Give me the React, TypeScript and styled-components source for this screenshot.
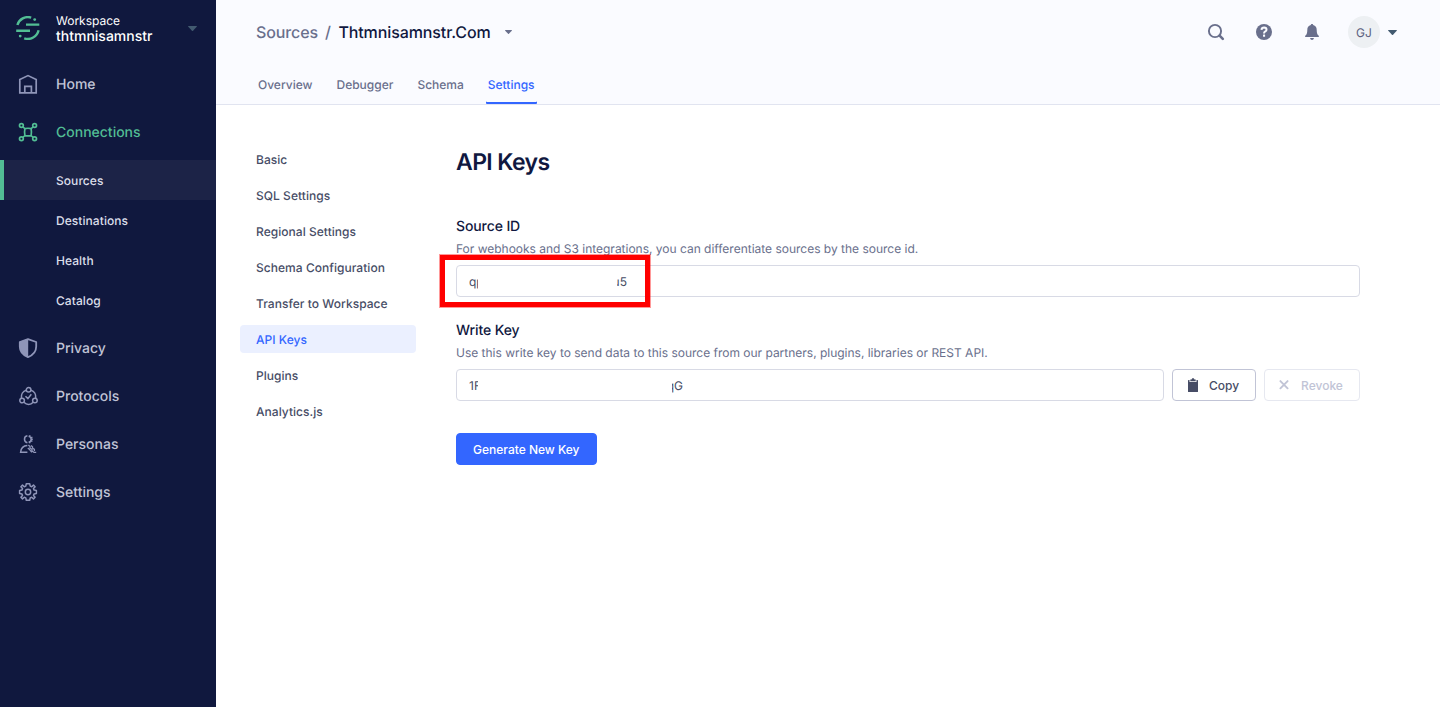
import React from 'react';
import styled, { createGlobalStyle } from 'styled-components';

const GlobalStyle = createGlobalStyle`
  *, *::before, *::after { box-sizing: border-box; }
  body {
    margin: 0;
    background: #fff;
    color: #474d66;
    font-family: Inter, "Liberation Sans", sans-serif;
    font-size: 12px;
    -webkit-font-smoothing: antialiased;
    text-rendering: geometricPrecision;
  }
  button, input { font: inherit; }
`;

const Page = styled.div`
  display: flex;
  height: 707px;
  overflow: hidden;
`;

const Sidebar = styled.aside`
  flex: none;
  width: 216px;
  background: #10183e;
`;

const Workspace = styled.div`
  display: flex;
  align-items: center;
  height: 60px;
  padding: 0 19px 4px 16px;
`;

const WorkspaceText = styled.div`
  flex: 1;
  margin-left: 16px;
  color: #fff;
`;

const WorkspaceLabel = styled.div`
  font-size: 12px;
  line-height: 17px;
`;

const WorkspaceName = styled.div`
  font-size: 14px;
  font-weight: 500;
  line-height: 16px;
`;

const NavItem = styled.div<{ $active?: boolean }>`
  display: flex;
  align-items: center;
  gap: 16px;
  height: 48px;
  padding-left: 16px;
  color: ${(p) => (p.$active ? '#52bd94' : '#c0c4d6')};
  font-size: 14px;
  font-weight: 500;
  svg { color: ${(p) => (p.$active ? '#52bd94' : '#8f95b8')}; }
`;

const NavLabel = styled.span`
  padding-top: 2px;
  line-height: 18px;
`;

const SubNav = styled.div`
  padding: 4px 0;
`;

const SubItem = styled.div<{ $active?: boolean }>`
  height: 40px;
  padding-left: 52px;
  border-left: 4px solid ${(p) => (p.$active ? '#52bd94' : 'transparent')};
  background: ${(p) => (p.$active ? '#1c2347' : 'transparent')};
  color: #dcdfea;
  font-size: 12px;
  font-weight: 500;
  line-height: 41px;
  letter-spacing: 0.06px;
`;

const Main = styled.main`
  flex: 1;
  min-width: 0;
`;

const Header = styled.header`
  height: 105px;
  background: #fafbff;
  border-bottom: 1px solid #e1e4f0;
`;

const TopBar = styled.div`
  display: flex;
  align-items: center;
  justify-content: space-between;
  height: 64px;
  padding: 0 43.5px 0 40px;
`;

const Breadcrumb = styled.div`
  display: flex;
  align-items: center;
  font-size: 16px;
  font-weight: 500;
  letter-spacing: -0.1px;
  color: #696f8c;
`;

const Slash = styled.span`
  margin: 0 7.5px 0 7px;
`;

const Current = styled.span`
  margin-right: 14.5px;
  color: #101840;
`;

const Tools = styled.div`
  display: flex;
  align-items: center;
  gap: 24px;
  color: #696f8c;
`;

const Account = styled.div`
  display: flex;
  align-items: center;
  gap: 7.5px;
`;

const Avatar = styled.div`
  display: grid;
  place-items: center;
  width: 32px;
  height: 32px;
  border-radius: 50%;
  background: #edf0f3;
  color: #5c6280;
  font-size: 12px;
`;

const Tabs = styled.nav`
  display: flex;
  gap: 20px;
  height: 40px;
  padding-left: 40px;
`;

const Tab = styled.div<{ $active?: boolean }>`
  height: 40px;
  padding: 0 2px;
  line-height: 41px;
  font-weight: 500;
  color: ${(p) => (p.$active ? '#3366ff' : '#696f8c')};
  box-shadow: ${(p) => (p.$active ? 'inset 0 -2px #3366ff' : 'none')};
  border-radius: 1px;
`;

const Body = styled.div`
  display: flex;
  gap: 40px;
  padding: 40px 80px 0 24px;
`;

const SettingsNav = styled.nav`
  display: flex;
  flex: none;
  flex-direction: column;
  gap: 8px;
  width: 176px;
`;

const SettingsItem = styled.div<{ $active?: boolean }>`
  height: 28px;
  padding-left: 16px;
  border-radius: 4px;
  line-height: 29px;
  font-weight: 500;
  letter-spacing: 0.04px;
  background: ${(p) => (p.$active ? '#ebf0ff' : 'transparent')};
  color: ${(p) => (p.$active ? '#3366ff' : '#474d66')};
`;

const Content = styled.section`
  flex: 1;
  min-width: 0;
`;

const Title = styled.h1`
  margin: 0 0 38px;
  color: #101840;
  font-size: 23px;
  font-weight: 600;
  line-height: 34px;
  letter-spacing: -0.6px;
`;

const Field = styled.div`
  position: relative;
  margin-bottom: 24px;
`;

const Label = styled.div`
  color: #101840;
  font-size: 14px;
  font-weight: 500;
  line-height: 20px;
  letter-spacing: -0.1px;
`;

const Hint = styled.div`
  margin: 3px 0 7px;
  color: #696f8c;
  font-size: 12px;
  line-height: 18px;
  letter-spacing: -0.01px;
`;

const FieldRow = styled.div`
  display: flex;
  gap: 8px;
`;

const KeyBox = styled.div`
  display: flex;
  flex: 1;
  align-items: center;
  height: 32px;
  padding-left: 12px;
  border: 1px solid #d8dae5;
  border-radius: 4px;
  font-size: 12px;
`;

const Fragment = styled.span<{ $width: number; $gap?: number; $tail?: boolean }>`
  display: flex;
  justify-content: ${(p) => (p.$tail ? 'flex-end' : 'flex-start')};
  width: ${(p) => p.$width}px;
  margin-left: ${(p) => p.$gap ?? 0}px;
  overflow: hidden;
  white-space: nowrap;
`;

const Highlight = styled.div`
  position: absolute;
  top: 38px;
  left: -16px;
  width: 210px;
  height: 52px;
  border: 5px solid #ff0000;
  box-shadow: 0 0 0 1px rgba(255, 0, 0, 0.4);
`;

const Button = styled.button<{ $kind: 'default' | 'disabled' | 'primary' }>`
  display: flex;
  align-items: center;
  justify-content: center;
  height: 32px;
  padding: 0;
  border: 1px solid ${(p) => ({ default: '#c1c4d6', disabled: '#e6e8f0', primary: '#3366ff' })[p.$kind]};
  border-radius: 4px;
  background: ${(p) => (p.$kind === 'primary' ? '#3366ff' : '#fff')};
  color: ${(p) => ({ default: '#474d66', disabled: '#c1c4d6', primary: '#fff' })[p.$kind]};
  font-weight: 500;
`;

const CopyButton = styled(Button)`
  width: 84px;
  padding-right: 2px;
  gap: 10px;
`;

const RevokeButton = styled(Button)`
  width: 96px;
  padding-right: 3px;
  gap: 11px;
`;

const GenerateButton = styled(Button)`
  width: 140.5px;
  margin-top: 32px;
`;

const Caret = ({ w, h, color }: { w: number; h: number; color: string }) => (
  <svg width={w} height={h} viewBox="0 0 10 5" preserveAspectRatio="none">
    <path d="M0.6 0H9.4Q10.2 0.1 9.7 0.8L5.6 4.7Q5 5.2 4.4 4.7L0.3 0.8Q-0.2 0.1 0.6 0Z" fill={color} />
  </svg>
);

const Logo = () => (
  <svg width="24" height="24" viewBox="0 0 24 24" fill="none" stroke="#52bd94" strokeWidth="2.4">
    <path d="M1.4 9A11 11 0 0 1 15.2 1.6M22.6 14.3A11 11 0 0 1 8.2 22.3M10 8.6H23.3M0.2 14.7H14" />
    <circle cx="18.7" cy="3.6" r="1.4" fill="#52bd94" stroke="none" />
    <circle cx="4.2" cy="20.1" r="1.4" fill="#52bd94" stroke="none" />
  </svg>
);

const NavIcon = ({ children }: { children: React.ReactNode }) => (
  <svg width="24" height="24" viewBox="0 0 24 24" fill="none" stroke="currentColor" strokeWidth="1.5">
    {children}
  </svg>
);

const HomeIcon = () => (
  <NavIcon>
    <path strokeWidth="1.7" d="M3.8 20.9V7.6L12 3.6L20.2 7.6V20.9ZM8.8 20.9V14.3H15.4V20.9" />
  </NavIcon>
);

const ConnectionsIcon = () => (
  <NavIcon>
    <g strokeWidth="1.7">
      <circle cx="5.4" cy="5.5" r="1.9" />
      <circle cx="18.6" cy="5.5" r="1.9" />
      <circle cx="5.4" cy="18.7" r="1.9" />
      <circle cx="18.6" cy="18.7" r="1.9" />
      <path d="M6.8 6.9L8.9 8.6Q12 7.9 15.1 8.6L17.2 6.9M6.8 17.3L8.9 15.6Q12 16.3 15.1 15.6L17.2 17.3M8.9 8.6Q8.2 12.1 8.9 15.6M15.1 8.6Q15.8 12.1 15.1 15.6" />
    </g>
  </NavIcon>
);

const PrivacyIcon = () => (
  <NavIcon>
    <path strokeWidth="1.8" strokeLinejoin="round" d="M12 3.2L20.2 6V10.5C20.2 15.3 16.8 19.2 12 21.1C7.2 19.2 3.8 15.3 3.8 10.5V6Z" />
    <path fill="currentColor" stroke="none" d="M12.2 2.8V21.4C7 19.4 3.5 15.3 3.5 10.5V6Z" />
  </NavIcon>
);

const ProtocolsIcon = () => (
  <NavIcon>
    <circle cx="12.6" cy="5.8" r="2.3" />
    <circle cx="6.1" cy="16.5" r="2.3" />
    <circle cx="18.9" cy="16.5" r="2.3" />
    <path d="M10.2 6.2C6.8 7.1 5 10.5 5.4 14M15 6.2C18.4 7.1 20.1 10.5 19.7 14M7.9 18.2C10.8 21.1 14.6 21.1 17.2 18.2M9.5 12.3L11.9 14.6L15.3 10.2" />
  </NavIcon>
);

const PersonasIcon = () => (
  <NavIcon>
    <path d="M11.4 3.8A3.5 3.5 0 0 0 11.4 10.7M11.4 13.6Q5.2 14 4.6 20.2H11.4" />
    <path strokeWidth="1.4" d="M12.6 4.2A3.1 3.1 0 0 1 12.6 10.3M13.5 4.6L14.1 3.2M15 5.8L16.4 5.2M15.3 7.3H16.8M15 8.7L16.4 9.4M13.5 9.9L14.1 11.3" />
    <path strokeWidth="1.3" d="M12.4 13L14 14.5V16L16 17.4V19L18 20.4H20.2M15 13.4L16.5 14.8V16L18.4 17.4V19M11.8 16L13.5 17.4L15.8 20.4" />
  </NavIcon>
);

const SettingsIcon = () => (
  <NavIcon>
    <circle cx="12" cy="12" r="2.7" />
    <path strokeLinejoin="round" d="M10.3 3.7H13.7L14.2 6.1L15.7 6.7L17.5 5.1L19.1 6.7L17.5 8.6L18.1 10.1L20.4 10.5V13.5L18.1 13.9L17.5 15.4L19.1 17.3L17.5 18.9L15.7 17.3L14.2 17.9L13.7 20.3H10.3L9.8 17.9L8.3 17.3L6.5 18.9L4.9 17.3L6.5 15.4L5.9 13.9L3.6 13.5V10.5L5.9 10.1L6.5 8.6L4.9 6.7L6.5 5.1L8.3 6.7L9.8 6.1Z" />
  </NavIcon>
);

const SearchIcon = () => (
  <svg width="24" height="24" viewBox="0 0 24 24" fill="none" stroke="currentColor">
    <circle cx="11" cy="11" r="6.1" strokeWidth="1.9" />
    <path d="M15.6 15.6L18.8 18.8" strokeWidth="2.6" strokeLinecap="round" />
  </svg>
);

const HelpIcon = () => (
  <svg width="24" height="24" viewBox="0 0 24 24" fill="none">
    <circle cx="12" cy="12" r="8" fill="currentColor" />
    <path d="M9.5 9.9Q9.7 7.6 12.1 7.6Q14.5 7.7 14.5 9.7Q14.5 10.8 13.3 11.4Q12 12.1 12 13.5" stroke="#fafbff" strokeWidth="2" />
    <rect x="11" y="14.6" width="2.1" height="2.1" rx=".5" fill="#fafbff" />
  </svg>
);

const BellIcon = () => (
  <svg width="24" height="24" viewBox="0 0 24 24" fill="currentColor">
    <path d="M12 4C12.8 4 13.2 4.5 13.2 5.1C15.6 5.7 16.7 7.4 16.7 10C16.7 13.2 17.3 14.5 18.5 15.5C19.4 16.2 19 17 18.3 17H5.7C5 17 4.6 16.2 5.5 15.5C6.7 14.5 7.3 13.2 7.3 10C7.3 7.4 8.4 5.7 10.8 5.1C10.8 4.5 11.2 4 12 4ZM10 18H14Q13.5 20 12 20Q10.5 20 10 18Z" />
  </svg>
);

const ClipboardIcon = () => (
  <svg width="12" height="14" viewBox="0 0 12 14" fill="currentColor">
    <path d="M1.6 2H2.5V4H9.5V2H10.4Q11 2 11 2.6V13.4Q11 14 10.4 14H1.6Q1 14 1 13.4V2.6Q1 2 1.6 2ZM3.3 1.5H4.5Q5 0 6 0T7.5 1.5H8.7V3.2H3.3Z" />
  </svg>
);

const CrossIcon = () => (
  <svg width="12" height="12" viewBox="0 0 12 12" stroke="currentColor" strokeWidth="1.9" strokeLinecap="round">
    <path d="M2.4 2.1L9.6 9.3M9.6 2.1L2.4 9.3" />
  </svg>
);

const subItems = ['Sources', 'Destinations', 'Health', 'Catalog'];
const tabs = ['Overview', 'Debugger', 'Schema', 'Settings'];
const settings = [
  'Basic',
  'SQL Settings',
  'Regional Settings',
  'Schema Configuration',
  'Transfer to Workspace',
  'API Keys',
  'Plugins',
  'Analytics.js',
];

export default function App() {
  return (
    <Page>
      <GlobalStyle />
      <Sidebar>
        <Workspace>
          <Logo />
          <WorkspaceText>
            <WorkspaceLabel>Workspace</WorkspaceLabel>
            <WorkspaceName>thtmnisamnstr</WorkspaceName>
          </WorkspaceText>
          <Caret w={9} h={5} color="#425a70" />
        </Workspace>
        <NavItem><HomeIcon /><NavLabel>Home</NavLabel></NavItem>
        <NavItem $active><ConnectionsIcon /><NavLabel>Connections</NavLabel></NavItem>
        <SubNav>
          {subItems.map((item) => (
            <SubItem key={item} $active={item === 'Sources'}>{item}</SubItem>
          ))}
        </SubNav>
        <NavItem><PrivacyIcon /><NavLabel>Privacy</NavLabel></NavItem>
        <NavItem><ProtocolsIcon /><NavLabel>Protocols</NavLabel></NavItem>
        <NavItem><PersonasIcon /><NavLabel>Personas</NavLabel></NavItem>
        <NavItem><SettingsIcon /><NavLabel>Settings</NavLabel></NavItem>
      </Sidebar>
      <Main>
        <Header>
          <TopBar>
            <Breadcrumb>
              <span>Sources</span>
              <Slash>/</Slash>
              <Current>Thtmnisamnstr.Com</Current>
              <Caret w={7} h={4} color="#696f8c" />
            </Breadcrumb>
            <Tools>
              <SearchIcon />
              <HelpIcon />
              <BellIcon />
              <Account>
                <Avatar>GJ</Avatar>
                <Caret w={9} h={5} color="#425a70" />
              </Account>
            </Tools>
          </TopBar>
          <Tabs>
            {tabs.map((tab) => (
              <Tab key={tab} $active={tab === 'Settings'}>{tab}</Tab>
            ))}
          </Tabs>
        </Header>
        <Body>
          <SettingsNav>
            {settings.map((item) => (
              <SettingsItem key={item} $active={item === 'API Keys'}>{item}</SettingsItem>
            ))}
          </SettingsNav>
          <Content>
            <Title>API Keys</Title>
            <Field>
              <Label>Source ID</Label>
              <Hint>For webhooks and S3 integrations, you can differentiate sources by the source id.</Hint>
              <KeyBox>
                <Fragment $width={9}>qp</Fragment>
                <Fragment $width={10} $gap={139} $tail>u5</Fragment>
              </KeyBox>
              <Highlight />
            </Field>
            <Field>
              <Label>Write Key</Label>
              <Hint>Use this write key to send data to this source from our partners, plugins, libraries or REST API.</Hint>
              <FieldRow>
                <KeyBox>
                  <Fragment $width={9}>1F</Fragment>
                  <Fragment $width={11} $gap={194} $tail>qG</Fragment>
                </KeyBox>
                <CopyButton $kind="default"><ClipboardIcon />Copy</CopyButton>
                <RevokeButton $kind="disabled"><CrossIcon />Revoke</RevokeButton>
              </FieldRow>
            </Field>
            <GenerateButton $kind="primary">Generate New Key</GenerateButton>
          </Content>
        </Body>
      </Main>
    </Page>
  );
}
